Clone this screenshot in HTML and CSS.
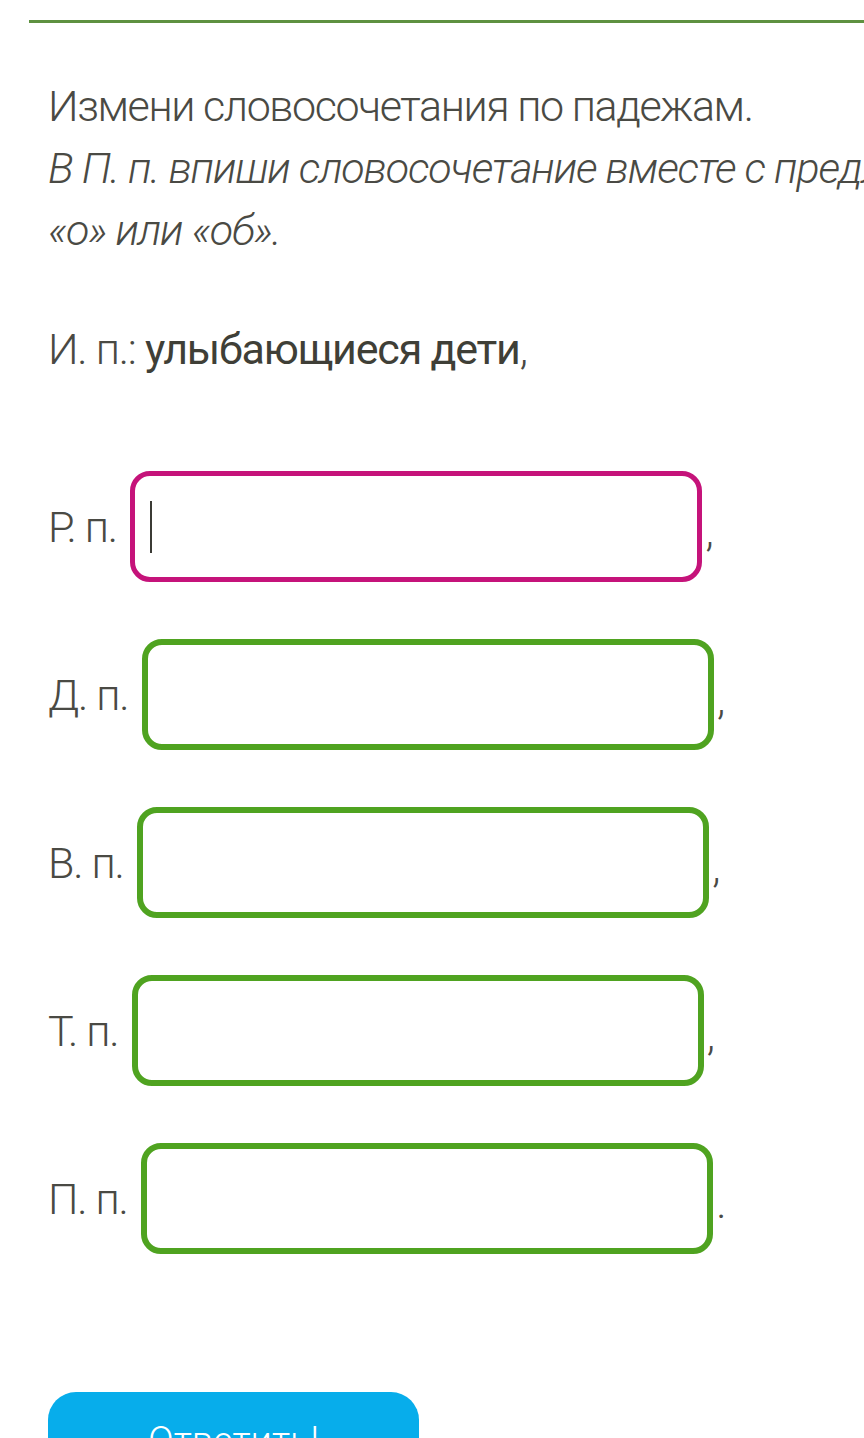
FILE: index.html
```html
<!DOCTYPE html>
<html lang="ru">
<head>
<meta charset="utf-8">
<link rel="stylesheet" href="styles.css">
</head>
<body>
<div class="page">
  <div class="rule"></div>
  <div class="task">
    <p class="lead">Измени словосочетания по падежам.<br><em>В П. п. впиши словосочетание вместе с предлогом</em><br><em>«о» или «об».</em></p>
    <p class="base">И. п.: <strong>улыбающиеся дети</strong>,</p>
    <div class="rows">
      <div class="row"><span class="lbl">Р. п.</span><div class="field active"><span class="caret"></span></div><span class="punct">,</span></div>
      <div class="row"><span class="lbl">Д. п.</span><div class="field"></div><span class="punct">,</span></div>
      <div class="row"><span class="lbl">В. п.</span><div class="field"></div><span class="punct">,</span></div>
      <div class="row"><span class="lbl">Т. п.</span><div class="field"></div><span class="punct">,</span></div>
      <div class="row"><span class="lbl">П. п.</span><div class="field"></div><span class="punct">.</span></div>
    </div>
    <button class="submit">Ответить!</button>
  </div>
</div>
</body>
</html>
```

FILE: styles.css
```css
html, body {
  margin: 0;
  padding: 0;
  background: #ffffff;
}
body {
  width: 864px;
  height: 1438px;
  overflow: hidden;
  font-family: Roboto, "Liberation Sans", sans-serif;
  font-weight: 300;
  color: #4a4a44;
}
.page {
  padding-top: 20px;
}
.rule {
  margin-left: 29px;
  height: 3px;
  background: #5e9140;
}
.task {
  padding-left: 48px;
  white-space: nowrap;
}
.lead {
  margin: 52px 0 0 0;
  font-size: 43px;
  line-height: 62px;
  letter-spacing: -1.4px;
}
.lead em {
  font-style: italic;
  letter-spacing: -1.15px;
}
.base {
  margin: 58px 0 0 0;
  font-size: 43px;
  line-height: 60px;
  letter-spacing: -1.2px;
}
.base strong {
  font-weight: 400;
  color: #3f3f37;
}
.rows {
  margin-top: 92px;
  display: flex;
  flex-direction: column;
  gap: 57px;
}
.row {
  display: flex;
  align-items: center;
  font-size: 43px;
  line-height: 50px;
  letter-spacing: -1.2px;
}
.lbl {
  margin-right: 13.5px;
}
.field {
  box-sizing: border-box;
  width: 572px;
  height: 111px;
  border: 6px solid #4fa320;
  border-radius: 20px;
  display: flex;
  align-items: center;
  padding-left: 15px;
}
.field.active {
  border: 5px solid #c5137a;
}
.caret {
  width: 2px;
  height: 52px;
  background: #3b3b35;
}
.punct {
  margin-left: 3px;
  padding-top: 8px;
}
.submit {
  display: block;
  margin-top: 138px;
  width: 371px;
  height: 110px;
  border: 0;
  border-radius: 28px;
  background: #07adeb;
  color: #ffffff;
  font-family: Roboto, "Liberation Sans", sans-serif;
  font-weight: 300;
  font-size: 38px;
  padding-bottom: 14px;
}
```
